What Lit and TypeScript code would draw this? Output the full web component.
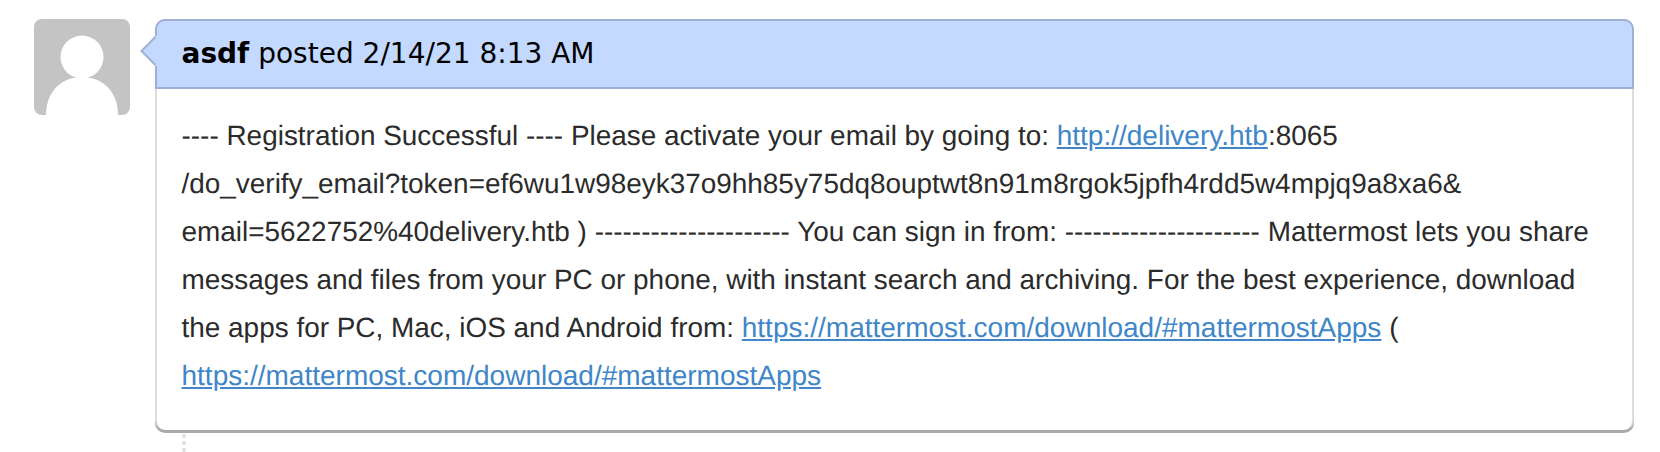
import { LitElement, html, css } from "lit";
import { customElement } from "lit/decorators.js";

@customElement("app-root")
export class AppRoot extends LitElement {
  static styles = css`
    :host { display: block; width: 1660px; height: 452px; overflow: hidden; background: #fff; position: relative; }
    .row { display: flex; align-items: flex-start; gap: 24.5px; padding: 19px 26px 0 34px; }
    .avatar { width: 96px; height: 96px; flex: none; display: block; }
    .box { flex: 1; min-width: 0; position: relative; border: 2px solid #ddd; border-bottom: 0; border-radius: 10px; background: #fff; box-shadow: 0 3px 0 0 #aaa; }
    .head { margin: -2px -2px 0; height: 70px; box-sizing: border-box; background: #c4d9ff; border: 2px solid #9fb0d2; border-radius: 10px 10px 0 0; padding: 0 25px; display: flex; align-items: center; font: 28px/36px "DejaVu Sans", sans-serif; color: #000; white-space: pre; }
    .head b { font-weight: 700; }
    .arrow { position: absolute; left: -16.5px; top: 15px; width: 30px; height: 30px; }
    .body { padding: 23px 25px 30px; font: 27.93px/48px "Liberation Sans", sans-serif; color: #2b2b2b; text-rendering: geometricPrecision; }
    .body a { font-size: 28px; color: #4086c8; text-decoration: underline; }
    .nw { white-space: nowrap; }
    .dots { position: absolute; left: 182px; top: 434px; height: 18px; border-left: 4px dotted #ddd; }
  `;
  render() {
    return html`
      <div class="row">
        <svg class="avatar" viewBox="0 0 96 96">
          <rect width="96" height="96" rx="8" fill="#c4c4c4" />
          <circle cx="48" cy="38" r="21.5" fill="#fff" />
          <path d="M12 96C12 72 28 58 48 58S84 72 84 96Z" fill="#fff" />
        </svg>
        <div class="box">
          <svg class="arrow" viewBox="0 0 30 30">
            <path d="M15 0L1 15L15 30H20V0Z" fill="#c4d9ff" />
            <path d="M15.5 1L1.5 15L15.5 29" fill="none" stroke="#9fb0d2" stroke-width="2" />
          </svg>
          <div class="head"><span><b>asdf</b> posted 2/14/21 8:13 AM</span></div>
          <div class="body">---- Registration Successful ---- Please activate your email by going to: <a href="#">http://delivery.htb</a>:8065 <span class="nw">/do_verify_email?token=ef6wu1w98eyk37o9hh85y75dq8ouptwt8n91m8rgok5jpfh4rdd5w4mpjq9a8xa6&amp;</span><wbr><span class="nw">email=5622752%40delivery.htb</span> ) --------------------- You can sign in from: --------------------- Mattermost lets you share messages and files from your PC or phone, with instant search and archiving. For the best experience, download the apps for PC, Mac, iOS and Android from: <a href="#">https://mattermost.com/download/#mattermostApps</a> ( <a href="#">https://mattermost.com/download/#mattermostApps</a></div>
        </div>
      </div>
      <div class="dots"></div>
    `;
  }
}
